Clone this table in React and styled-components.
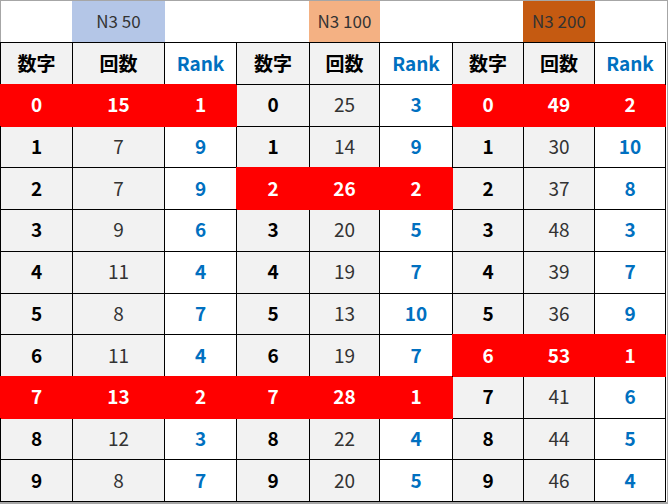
import React from 'react'
import styled, { createGlobalStyle } from 'styled-components'

const GlobalStyle = createGlobalStyle`
  body {
    margin: 0;
    background: #fff;
    font-family: 'Noto Sans CJK JP', 'Noto Sans', sans-serif;
  }
`

const COLS = '72px 92px 72px 73px 70px 73px 71px 71px 71px'

const Frame = styled.div`
  box-sizing: border-box;
  width: 668px;
  height: 504px;
  border-top: 1px solid #a6a6a6;
  border-right: 1px solid #a6a6a6;
  border-bottom: 2px solid #a6a6a6;
  display: flex;
  flex-direction: column;
`

const TopRow = styled.div`
  display: grid;
  grid-template-columns: ${COLS};
  height: 41px;
  box-sizing: border-box;
  border-left: 1px solid #a6a6a6;
`

const Label = styled.div`
  grid-column: ${p => p.$col};
  background: ${p => p.$bg};
  display: flex;
  align-items: center;
  justify-content: center;
  line-height: 1;
  padding-bottom: 2px;
  font-size: 17px;
  font-weight: 400;
  color: #333;
  margin-left: -1px;
`

const Grid = styled.div`
  display: grid;
  grid-template-columns: ${COLS};
  grid-template-rows: 42px repeat(10, 1fr);
  width: 666px;
  flex: 1;
  box-sizing: border-box;
  border-left: 1px solid #000;
  border-top: 1px solid #000;
`

const Cell = styled.div`
  box-sizing: border-box;
  border-right: 1px solid #000;
  border-bottom: 1px solid #000;
  display: flex;
  align-items: center;
  justify-content: center;
  line-height: 1;
  padding-bottom: 3px;
  font-size: 19px;
  background: ${p => (p.$kind === 'rank' ? '#fff' : '#f2f2f2')};
  color: ${p => (p.$kind === 'rank' ? '#0070c0' : p.$kind === 'count' ? '#333' : '#000')};
  font-weight: ${p => (p.$kind === 'count' ? 400 : 700)};

  ${p => p.$hot && `
    position: relative;
    background: #ff0000;
    color: #fff;
    font-weight: 700;
    border-color: #ff0000;
    box-shadow: -1px -1px 0 0 #ff0000;
  `}
`

const groups = [
  {
    label: 'N3 50',
    bg: '#b4c6e7',
    counts: [15, 7, 7, 9, 11, 8, 11, 13, 12, 8],
    ranks: [1, 9, 9, 6, 4, 7, 4, 2, 3, 7],
    hot: [0, 7]
  },
  {
    label: 'N3 100',
    bg: '#f4b183',
    counts: [25, 14, 26, 20, 19, 13, 19, 28, 22, 20],
    ranks: [3, 9, 2, 5, 7, 10, 7, 1, 4, 5],
    hot: [2, 7]
  },
  {
    label: 'N3 200',
    bg: '#c55a11',
    counts: [49, 30, 37, 48, 39, 36, 53, 41, 44, 46],
    ranks: [2, 10, 8, 3, 7, 9, 1, 6, 5, 4],
    hot: [0, 6]
  }
]

export default function App () {
  const rows = Array.from({ length: 10 }, (_, i) => i)

  return (
    <>
      <GlobalStyle />
      <Frame>
        <TopRow>
          { groups.map((g, gi) => (
            <Label key={ g.label } $col={ gi * 3 + 2 } $bg={ g.bg }>{ g.label }</Label>
          )) }
        </TopRow>
        <Grid>
          { groups.map(g => (
            <React.Fragment key={ 'h' + g.label }>
              <Cell $kind='digit'>数字</Cell>
              <Cell $kind='digit'>回数</Cell>
              <Cell $kind='rank'>Rank</Cell>
            </React.Fragment>
          )) }
          { rows.map(r => groups.map(g => {
            const hot = g.hot.includes(r)
            return (
              <React.Fragment key={ g.label + r }>
                <Cell $kind='digit' $hot={ hot }>{ r }</Cell>
                <Cell $kind='count' $hot={ hot }>{ g.counts[r] }</Cell>
                <Cell $kind='rank' $hot={ hot }>{ g.ranks[r] }</Cell>
              </React.Fragment>
            )
          })) }
        </Grid>
      </Frame>
    </>
  )
}
